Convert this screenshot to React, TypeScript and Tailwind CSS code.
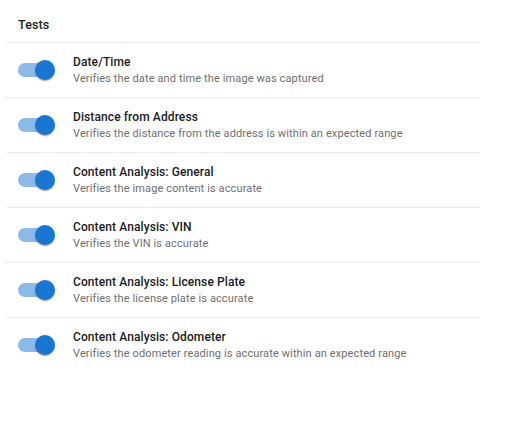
import React from "react";

const tests = [
  { title: "Date/Time", desc: "Verifies the date and time the image was captured" },
  { title: "Distance from Address", desc: "Verifies the distance from the address is within an expected range" },
  { title: "Content Analysis: General", desc: "Verifies the image content is accurate" },
  { title: "Content Analysis: VIN", desc: "Verifies the VIN is accurate" },
  { title: "Content Analysis: License Plate", desc: "Verifies the license plate is accurate" },
  { title: "Content Analysis: Odometer", desc: "Verifies the odometer reading is accurate within an expected range" },
];

function Toggle() {
  return (
    <div className="relative w-[34px] h-[14px] shrink-0">
      <div className="absolute inset-0 rounded-full bg-[#8cbbe9]" />
      <div className="absolute top-[-3px] left-[17px] w-[20px] h-[20px] rounded-full bg-[#1976d2] shadow-[0_2px_1px_-1px_rgba(0,0,0,0.2),0_1px_1px_0_rgba(0,0,0,0.14),0_1px_3px_0_rgba(0,0,0,0.12)]" />
    </div>
  );
}

export default function App() {
  return (
    <div className="w-[514px] h-[440px] bg-white" style={{ fontFamily: "Roboto, 'Liberation Sans', sans-serif" }}>
      <div className="ml-[6px] w-[474px]">
        <div className="pl-[12px] pt-[15px] pb-[7px] border-b border-[#ebebeb]">
          <div className="text-[12.5px] leading-[20px] font-medium tracking-[0.1px] text-[#212121]">Tests</div>
        </div>
        {tests.map((t, i) => (
          <div
            key={t.title}
            className={`flex items-center pl-[12px] pt-[10px] pb-[10px] ${i < tests.length - 1 ? "border-b border-[#ebebeb]" : ""}`}
          >
            <Toggle />
            <div className="ml-[21px] flex flex-col">
              <div className="text-[12px] leading-[18px] font-medium tracking-[0.1px] text-[#212121]">{t.title}</div>
              <div className="text-[11px] leading-[16px] tracking-[0.12px] text-[#6f6f6f]">{t.desc}</div>
            </div>
          </div>
        ))}
      </div>
    </div>
  );
}
